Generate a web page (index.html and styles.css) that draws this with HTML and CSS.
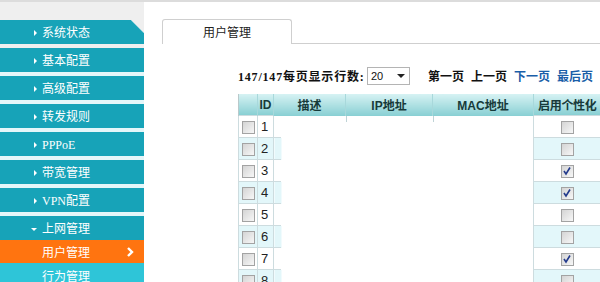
FILE: index.html
```html
<!DOCTYPE html>
<html>
<head>
<meta charset="utf-8">
<title>用户管理</title>
<link rel="stylesheet" href="styles.css">
</head>
<body>
<div class="topline"></div>
<div class="page">
  <div class="sidebar">
    <ul class="menu">
      <li class="item first"><span class="arr"></span>系统状态</li>
      <li class="item"><span class="arr"></span>基本配置</li>
      <li class="item"><span class="arr"></span>高级配置</li>
      <li class="item"><span class="arr"></span>转发规则</li>
      <li class="item"><span class="arr"></span>PPPoE</li>
      <li class="item"><span class="arr"></span>带宽管理</li>
      <li class="item"><span class="arr"></span>VPN配置</li>
      <li class="item open"><span class="arr down"></span>上网管理</li>
      <li class="sub active">用户管理
        <svg width="7" height="10" viewBox="0 0 7 10"><path d="M1 1 L5 5 L1 9" fill="none" stroke="#fff" stroke-width="2.4"/></svg>
      </li>
      <li class="sub alt">行为管理</li>
    </ul>
  </div>

  <div class="main">
    <div class="tabs">
      <div class="tab">用户管理</div>
      <div class="tabline"></div>
    </div>

    <div class="pager">
      <span class="count">147/147每页显示行数:</span>
      <span class="select"><span>20</span><span class="caret"></span></span>
      <span class="plink">第一页</span>
      <span class="plink">上一页</span>
      <span class="plink on">下一页</span>
      <span class="plink on">最后页</span>
    </div>

    <table class="users">
      <colgroup>
        <col class="c-cb"><col class="c-id"><col class="c-desc"><col class="c-ip"><col class="c-mac"><col class="c-on">
      </colgroup>
      <tr class="head">
        <th class="cb"></th>
        <th class="id">ID</th>
        <th class="desc">描述</th>
        <th class="ip">IP地址</th>
        <th class="mac">MAC地址</th>
        <th class="on">启用个性化</th>
      </tr>
      <tr class="odd top"><td class="cb"><span class="box"></span></td><td class="id">1</td><td class="desc"></td><td class="ip"></td><td class="mac"></td><td class="on"><span class="box"></span></td></tr>
      <tr class="even"><td class="cb"><span class="box"></span></td><td class="id">2</td><td class="desc"></td><td class="ip"></td><td class="mac"></td><td class="on"><span class="box"></span></td></tr>
      <tr class="odd"><td class="cb"><span class="box"></span></td><td class="id">3</td><td class="desc"></td><td class="ip"></td><td class="mac"></td><td class="on"><span class="box checked"><svg width="10" height="10" viewBox="0 0 10 10"><path d="M2 5 L4 8 L8 1.5" fill="none" stroke="#233a8c" stroke-width="1.6"/></svg></span></td></tr>
      <tr class="even"><td class="cb"><span class="box"></span></td><td class="id">4</td><td class="desc"></td><td class="ip"></td><td class="mac"></td><td class="on"><span class="box checked"><svg width="10" height="10" viewBox="0 0 10 10"><path d="M2 5 L4 8 L8 1.5" fill="none" stroke="#233a8c" stroke-width="1.6"/></svg></span></td></tr>
      <tr class="odd"><td class="cb"><span class="box"></span></td><td class="id">5</td><td class="desc"></td><td class="ip"></td><td class="mac"></td><td class="on"><span class="box"></span></td></tr>
      <tr class="even"><td class="cb"><span class="box"></span></td><td class="id">6</td><td class="desc"></td><td class="ip"></td><td class="mac"></td><td class="on"><span class="box"></span></td></tr>
      <tr class="odd"><td class="cb"><span class="box"></span></td><td class="id">7</td><td class="desc"></td><td class="ip"></td><td class="mac"></td><td class="on"><span class="box checked"><svg width="10" height="10" viewBox="0 0 10 10"><path d="M2 5 L4 8 L8 1.5" fill="none" stroke="#233a8c" stroke-width="1.6"/></svg></span></td></tr>
      <tr class="even"><td class="cb"><span class="box"></span></td><td class="id">8</td><td class="desc"></td><td class="ip"></td><td class="mac"></td><td class="on"><span class="box"></span></td></tr>
    </table>
  </div>
</div>
</body>
</html>
```

FILE: styles.css
```css
html, body {
	margin:0;
	padding:0;
	overflow:hidden;
	background:#fff;
	font-family:"Liberation Serif", "Noto Sans CJK SC", serif;
	font-size:12px;
}
.topline {
	height:2px;
	background:#dcdcdc;
}
.page {
	display:flex;
	height:280px;
}

/* left menu */
.sidebar {
	width:144px;
	flex:none;
	background:#efefef;
	padding-top:18px;
}
.menu {
	list-style:none;
	margin:0;
	padding:0;
}
.item {
	position:relative;
	height:24px;
	line-height:26px;
	padding-left:34px;
	margin-bottom:4px;
	background:#17a3b8;
	color:#fff;
	box-shadow:0 4px 0 #e4f6f9;
}
.item.first {
	clip-path:polygon(0 0, 131px 0, 100% 13px, 100% 100%, 0 100%);
}
.item.first:after {
	content:'';
	position:absolute;
	top:5px;
	right:-3px;
	width:18px;
	height:2px;
	background:#c8ecf1;
	transform:rotate(45deg);
}
.item.open {
	margin-bottom:0;
	box-shadow:none;
	padding-left:31px;
}
.arr {
	display:inline-block;
	vertical-align:middle;
	margin:-2px 5px 0 0;
	border-left:3px solid #fff;
	border-top:3px solid transparent;
	border-bottom:3px solid transparent;
}
.arr.down {
	border-top:3px solid #fff;
	border-left:3px solid transparent;
	border-right:3px solid transparent;
	border-bottom:0;
}
.sub {
	display:flex;
	align-items:center;
	justify-content:space-between;
	height:22px;
	padding:1px 10px 0 42px;
	color:#fff;
}
.sub.active {
	background:#ff7410;
}
.sub.alt {
	background:#2ec5d8;
	height:24px;
}

/* right content */
.main {
	flex:1;
	padding-top:17px;
}
.tabs {
	display:flex;
	align-items:flex-end;
	padding-left:18px;
}
.tab {
	width:128px;
	height:24px;
	line-height:26px;
	text-align:center;
	border:1px solid #cfcfcf;
	border-bottom:0;
	border-radius:3px 3px 0 0;
	color:#222;
}
.tabline {
	flex:1;
	border-bottom:1px solid #cfcfcf;
}
.pager {
	display:flex;
	align-items:center;
	margin:23px 0 9px 94px;
	height:18px;
	font-weight:bold;
	color:#111;
	white-space:nowrap;
}
.count {
	flex:none;
	width:129px;
	letter-spacing:0.8px;
}
.select {
	flex:none;
	display:flex;
	align-items:center;
	justify-content:space-between;
	border:1px solid #b4b4b4;
	padding:0 4px 0 3px;
	box-sizing:border-box;
	width:43px;
	height:18px;
	font-family:"Liberation Sans", sans-serif;
	font-weight:normal;
	font-size:11px;
	margin-right:18px;
}
.caret {
	border-top:4px solid #222;
	border-left:4px solid transparent;
	border-right:4px solid transparent;
}
.plink {
	flex:none;
	margin-right:7px;
}
.plink.on {
	color:#1a5ea8;
}

/* table */
.users {
	margin-left:94px;
	width:362px;
	border-collapse:collapse;
	table-layout:fixed;
	font-family:"Liberation Sans", "Noto Sans CJK SC", sans-serif;
	font-size:12px;
}
.c-cb { width:19px; }
.c-id { width:16px; }
.c-desc { width:72px; }
.c-ip { width:87px; }
.c-mac { width:101px; }
.c-on { width:67px; }
.users th {
	height:21px;
	padding:0;
	background:linear-gradient(#d6f2f3, #88cfd3);
	border-left:1px solid #a8d8db;
	color:#173a3a;
	font-weight:bold;
	text-align:center;
	white-space:nowrap;
}
.users th.cb { border-left:1px solid #b9c9cb; }
.users th.on { letter-spacing:-0.3px; }
.users td {
	height:21px;
	padding:0;
	text-align:center;
}
.users .odd { --bg:#fff; }
.users .even { --bg:#e3f7fa; }
.users td.cb, .users td.id, .users td.on {
	background:var(--bg);
	border:1px solid #cddcdf;
}
.users td.id {
	text-align:left;
	padding-left:3px;
	font-size:13px;
	color:#222;
}
.users td.desc {
	background:linear-gradient(#cddcdf, #cddcdf) left bottom / 7px 1px no-repeat,
		linear-gradient(to right, var(--bg) 7px, #fff 7px);
}
.users .top td.ip, .users .top td.mac {
	background:linear-gradient(#bfd3d6, #bfd3d6) left top / 1px 6px no-repeat;
}
.box {
	display:inline-block;
	vertical-align:middle;
	width:11px;
	height:11px;
	border:1px solid #a3a3a3;
	background:linear-gradient(135deg, #d4d4d4, #f7f7f7);
	position:relative;
}
.box svg {
	position:absolute;
	left:0;
	top:0;
}
```
